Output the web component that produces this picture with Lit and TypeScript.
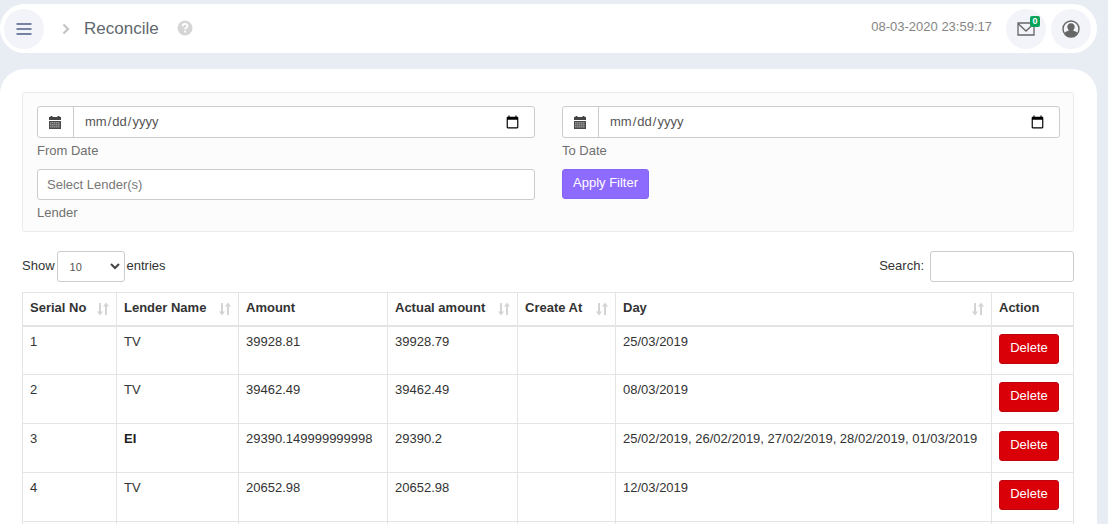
import { LitElement, html, css, svg } from "lit";
import { customElement } from "lit/decorators.js";
import { classMap } from "lit/directives/class-map.js";

interface Row {
  serial: string;
  lender: string;
  amount: string;
  actual: string;
  day: string;
  strong?: boolean;
}

const columns = [
  { key: "serial", label: "Serial No", sortable: true },
  { key: "lender", label: "Lender Name", sortable: true },
  { key: "amount", label: "Amount", sortable: false },
  { key: "actual", label: "Actual amount", sortable: true },
  { key: "created", label: "Create At", sortable: true },
  { key: "day", label: "Day", sortable: true },
  { key: "action", label: "Action", sortable: false },
];

const rows: Row[] = [
  { serial: "1", lender: "TV", amount: "39928.81", actual: "39928.79", day: "25/03/2019" },
  { serial: "2", lender: "TV", amount: "39462.49", actual: "39462.49", day: "08/03/2019" },
  {
    serial: "3",
    lender: "EI",
    amount: "29390.149999999998",
    actual: "29390.2",
    day: "25/02/2019, 26/02/2019, 27/02/2019, 28/02/2019, 01/03/2019",
    strong: true,
  },
  { serial: "4", lender: "TV", amount: "20652.98", actual: "20652.98", day: "12/03/2019" },
];

const calendarIcon = html`<svg width="12" height="13" viewBox="0 0 12 13" aria-hidden="true">
  <path d="M0 1h1.500V0h2v1h5V0h2v1H12v3H0z" fill="#444" />
  <path d="M0 5h12v8H0z" fill="#4a4a4a" />
  ${[6, 8, 10].map((y) => [1, 3, 5, 7, 9].map((x) => svg`<rect x=${x + 0.3} y=${y + 0.3} width="1.1" height="1.1" fill="#ddd" />`))}
</svg>`;

const sortIcon = html`<svg class="sort" width="12" height="14" viewBox="0 0 12 14" aria-hidden="true">
  <path d="M3 1v11M9 13V3" stroke="#d4d4d4" stroke-width="2" />
  <path d="M0 9.500h6L3 13.500zM6 4.500h6L9 .5z" fill="#d4d4d4" />
</svg>`;

@customElement("app-root")
export class AppRoot extends LitElement {
  static styles = css`
    :host {
      display: flex;
      flex-direction: column;
      box-sizing: border-box;
      height: 100vh;
      overflow: hidden;
      padding: 4px 11px 0 0;
      gap: 16px;
      background: #e8edf4;
      color: #333;
      font: 13px/18px "Liberation Sans", Arial, sans-serif;
    }
    *, *::before, *::after { box-sizing: border-box; }
    button, input, select { font: inherit; color: inherit; margin: 0; }
    .topbar {
      flex: none;
      display: flex;
      align-items: center;
      height: 49px;
      padding: 0 6px 0 4px;
      border-radius: 25px;
      background: #fff;
    }
    .round {
      position: relative;
      flex: none;
      display: grid;
      place-items: center;
      width: 40px;
      height: 40px;
      padding: 0;
      border: 0;
      border-radius: 50%;
      background: #f3f4f9;
    }
    .chevron { margin: 0 14px 0 18px; }
    .title { margin: 0; font-size: 17px; line-height: 24px; font-weight: 400; color: #5f686e; }
    .help { margin: 0 0 2px 18px; }
    .clock { margin: 0 14px 4px auto; color: #858585; }
    .mail { margin-right: 5px; }
    .badge {
      position: absolute;
      top: 7px;
      right: 6px;
      width: 10px;
      height: 11px;
      border-radius: 2px;
      background: #08a45c;
      color: #fff;
      font-size: 9px;
      line-height: 11px;
      font-weight: 700;
      text-align: center;
    }
    .card {
      flex: 1;
      min-height: 0;
      padding: 23px 23px 0 22px;
      border-radius: 25px 25px 0 0;
      background: #fff;
    }
    .filters {
      display: grid;
      grid-template-columns: 1fr 1fr;
      gap: 9px 27px;
      padding: 13px 13px 9px 14px;
      border: 1px solid #ebebeb;
      border-radius: 3px;
      background: #fcfcfc;
    }
    .field { display: flex; flex-direction: column; gap: 4px; }
    .field label { color: #707070; }
    .group { display: flex; height: 32px; border: 1px solid #ccc; border-radius: 3px; background: #fff; }
    .addon { display: grid; place-items: center; width: 36px; padding-right: 1px; border-right: 1px solid #ccc; }
    .date { flex: 1; min-width: 0; padding: 0 12px 0 10px; border: 0; background: none; color: #555; }
    .date::-webkit-calendar-picker-indicator { width: 15px; height: 15px; }
    .box { height: 31px; border: 1px solid #ccc; border-radius: 3px; background: #fff; }
    .lender { width: 100%; padding: 0 9px; }
    .lender::placeholder { color: #777; opacity: 1; }
    .apply {
      justify-self: start;
      align-self: start;
      height: 30px;
      padding: 0 10px 2px;
      border: 1px solid #8266f0;
      border-radius: 3px;
      background: #8e6bff;
      color: #fff;
    }
    .tools { display: flex; align-items: center; justify-content: space-between; margin: 19px 0 10px; }
    .tool { display: flex; align-items: center; gap: 2px; }
    .search { gap: 6px; }
    .text { padding-bottom: 2px; }
    .length { position: relative; display: flex; }
    .length svg { position: absolute; right: 5px; top: 12px; pointer-events: none; }
    .select { appearance: none; width: 68px; padding: 0 12px; font-size: 11px; color: #555; }
    .query { width: 144px; padding: 0 8px; }
    .table { width: 100%; table-layout: fixed; border-collapse: collapse; border: 1px solid #d9d9d9; }
    .table th, .table td { border: 1px solid #e4e4e4; text-align: left; vertical-align: top; }
    .table th { height: 33px; padding: 6px 7px; border-bottom: 2px solid #e4e4e4; white-space: nowrap; }
    .table td { height: 49px; padding: 6px 7px; }
    .table .strong { font-weight: 700; color: #222; }
    .head { display: flex; justify-content: space-between; }
    .sort { margin-top: 3px; flex: none; }
    .serial { width: 94px; }
    .lendername { width: 122px; }
    .amount { width: 149px; }
    .actual { width: 130px; }
    .created { width: 98px; }
    .action { width: 82px; }
    .delete {
      display: block;
      width: 60px;
      height: 30px;
      margin-top: 1px;
      padding: 0 0 2px;
      border: 1px solid #c00410;
      border-radius: 3px;
      background: #d90007;
      color: #fff;
    }
  `;

  private dateField(id: string, label: string) {
    return html`<div class="field">
      <div class="group">
        <span class="addon">${calendarIcon}</span>
        <input class="date" type="date" id=${id} />
      </div>
      <label for=${id}>${label}</label>
    </div>`;
  }

  render() {
    return html`
      <header class="topbar">
        <button class="round" aria-label="Menu">
          <svg width="16" height="14" viewBox="0 0 16 14"><path d="M.5 2h15M.5 7h15M.5 12h15" stroke="#7484a2" stroke-width="2.200" /></svg>
        </button>
        <svg class="chevron" width="8" height="12" viewBox="0 0 8 12" aria-hidden="true">
          <path d="M1.500 1.500L6 6l-4.500 4.500" fill="none" stroke="#c4c4c4" stroke-width="2.200" />
        </svg>
        <h1 class="title">Reconcile</h1>
        <svg class="help" width="16" height="16" viewBox="0 0 16 16" aria-hidden="true">
          <circle cx="8" cy="8" r="7.500" fill="#d6d6d6" />
          <path d="M5.700 6.200C5.700 3.300 10.400 3.300 10.400 6c0 1.700-2.300 1.700-2.300 3.400M8.100 10.800v1.800" fill="none" stroke="#fff" stroke-width="1.800" />
        </svg>
        <time class="clock">08-03-2020 23:59:17</time>
        <button class="round mail" aria-label="Messages">
          <svg width="18" height="14" viewBox="0 0 18 14">
            <path d="M1 1h16v12H1zM1 1.500l8 7.500 8-7.500" fill="none" stroke="#666" stroke-width="1.300" />
          </svg>
          <span class="badge">0</span>
        </button>
        <button class="round" aria-label="Account">
          <svg width="18" height="18" viewBox="0 0 18 18">
            <circle cx="9" cy="9" r="8" fill="none" stroke="#666" stroke-width="1.400" />
            <path d="M9 3.200c2.200 0 3.700 1.500 3.700 3.600 0 1.500-.7 2.700-1.500 3.400 0 1 3.100.8 4.200 2.700C13.900 15.500 11.500 16.800 9 16.800S4.100 15.500 2.600 12.900C3.700 11 6.800 11.200 6.800 10.200c-.8-.7-1.500-1.900-1.500-3.400 0-2.100 1.500-3.600 3.700-3.600z" fill="#666" />
          </svg>
        </button>
      </header>
      <main class="card">
        <form class="filters" @submit=${(e: Event) => e.preventDefault()}>
          ${this.dateField("from", "From Date")} ${this.dateField("to", "To Date")}
          <div class="field">
            <input class="box lender" id="lender" type="text" placeholder="Select Lender(s)" />
            <label for="lender">Lender</label>
          </div>
          <button class="apply" type="submit">Apply Filter</button>
        </form>
        <div class="tools">
          <div class="tool">
            <label class="text" for="length">Show</label>
            <span class="length">
              <select class="box select" id="length">
                <option>10</option>
                <option>25</option>
                <option>50</option>
                <option>100</option>
              </select>
              <svg width="10" height="7" viewBox="0 0 10 7" aria-hidden="true"><path d="M1 1l4 4 4-4" fill="none" stroke="#444" stroke-width="2" /></svg>
            </span>
            <span class="text">entries</span>
          </div>
          <div class="tool search">
            <label class="text" for="query">Search:</label>
            <input class="box query" id="query" type="search" />
          </div>
        </div>
        <table class="table">
          <thead>
            <tr>
              ${columns.map(
                (c) => html`<th
                  scope="col"
                  class=${classMap({ [c.key === "lender" ? "lendername" : c.key]: true })}
                >
                  <div class="head"><span>${c.label}</span>${c.sortable ? sortIcon : ""}</div>
                </th>`
              )}
            </tr>
          </thead>
          <tbody>
            ${rows.map(
              (r) => html`<tr>
                <td>${r.serial}</td>
                <td class=${classMap({ strong: !!r.strong })}>${r.lender}</td>
                <td>${r.amount}</td>
                <td>${r.actual}</td>
                <td></td>
                <td>${r.day}</td>
                <td><button class="delete" type="button">Delete</button></td>
              </tr>`
            )}
            <tr>
              ${columns.map(() => html`<td></td>`)}
            </tr>
          </tbody>
        </table>
      </main>
    `;
  }
}
